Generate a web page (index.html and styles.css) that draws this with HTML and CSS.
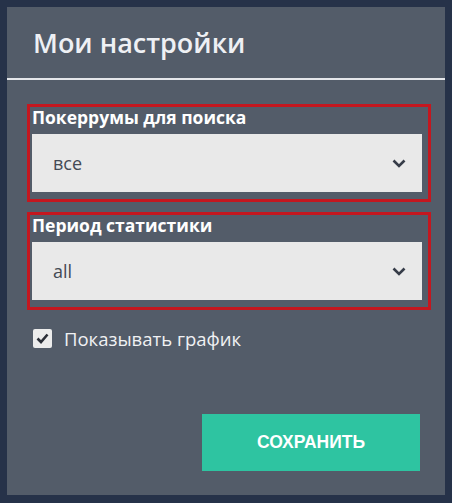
FILE: index.html
```html
<!DOCTYPE html>
<html lang="ru">
<head>
    <meta charset="UTF-8">
    <meta name="viewport" content="width=device-width, initial-scale=1.0">
    <title>Мои настройки</title>
    <link rel="stylesheet" href="styles.css">
</head>
<body>
    <div class="settings-panel">
        <h2 class="panel-title">Мои настройки</h2>

        <form class="settings-form">
            <!-- Rooms -->
            <div class="form-group">
                <label class="group-label">Покеррумы для поиска</label>
                <div class="select-box">
                    <span class="select-value">все</span>
                    <svg class="chevron" width="14" height="9" viewBox="0 0 14 9">
                        <path d="M1.5 1.5 L7 7 L12.5 1.5" fill="none" stroke="#363c48" stroke-width="2.6"/>
                    </svg>
                </div>
            </div>

            <!-- Period -->
            <div class="form-group">
                <label class="group-label">Период статистики</label>
                <div class="select-box">
                    <span class="select-value">all</span>
                    <svg class="chevron" width="14" height="9" viewBox="0 0 14 9">
                        <path d="M1.5 1.5 L7 7 L12.5 1.5" fill="none" stroke="#363c48" stroke-width="2.6"/>
                    </svg>
                </div>
            </div>

            <!-- Chart toggle -->
            <label class="check-row">
                <span class="check-box">
                    <svg width="13" height="11" viewBox="0 0 13 11">
                        <path d="M1.5 5.5 L5 9 L11.5 1.5" fill="none" stroke="#2b2f38" stroke-width="2.6"/>
                    </svg>
                </span>
                Показывать график
            </label>

            <div class="button-group">
                <button type="button" class="save-btn">СОХРАНИТЬ</button>
            </div>
        </form>
    </div>
</body>
</html>
```

FILE: styles.css
```css
/* General Styles */
body {
    margin: 0;
    padding: 7px 7px 8px;
    background-color: #263249;
    font-family: "Open Sans", sans-serif;
}

/* Panel */
.settings-panel {
    height: 488px;
    background-color: #535c69;
    display: flex;
    flex-direction: column;
    box-sizing: border-box;
}

.panel-title {
    margin: 0;
    height: 71px;
    padding-left: 26px;
    font-size: 27px;
    font-weight: 600;
    line-height: 71px;
    color: #eef0f4;
    border-bottom: 2px solid #e4e6ea;
}

.settings-form {
    flex: 1;
    display: flex;
    flex-direction: column;
    padding: 24px 14px 24px 20px;
}

/* Form groups */
.form-group {
    border: 3px solid #c4171f;
    padding: 0 6px 7px 2px;
    margin-bottom: 10px;
}

.group-label {
    display: block;
    margin-bottom: 7px;
    font-size: 17.5px;
    font-weight: 700;
    line-height: 20px;
    color: #ffffff;
}

.select-box {
    height: 58px;
    background-color: #e9e9e9;
    display: flex;
    align-items: center;
    justify-content: space-between;
    padding: 0 16px 0 21px;
}

.select-value {
    font-size: 18px;
    color: #444a55;
}

/* Checkbox */
.check-row {
    display: flex;
    align-items: center;
    gap: 12px;
    margin: 6px 0 0 6px;
    font-size: 18.5px;
    color: #f0f1f3;
}

.check-box {
    width: 19px;
    height: 19px;
    background-color: #ececec;
    border-radius: 2px;
    display: flex;
    align-items: center;
    justify-content: center;
}

/* Button */
.button-group {
    margin-top: auto;
    margin-right: 11px;
    display: flex;
    justify-content: flex-end;
}

.save-btn {
    width: 218px;
    height: 57px;
    border: none;
    background-color: #2ec4a1;
    color: #ffffff;
    font-family: "Liberation Sans", Arial, sans-serif;
    font-size: 17.5px;
    font-weight: 700;
}
```
